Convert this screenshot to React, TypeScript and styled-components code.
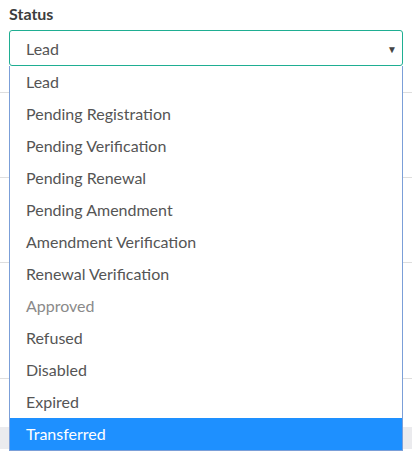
import React from "react";
import styled, { createGlobalStyle } from "styled-components";

const GlobalStyle = createGlobalStyle`
  html, body {
    margin: 0;
    padding: 0;
    background: #fff;
    font-family: Lato, "Open Sans", sans-serif;
  }
`;

const Page = styled.div`
  position: relative;
  width: 412px;
  height: 457px;
  overflow: hidden;
`;

const Field = styled.div`
  padding: 4px 9px 0;
`;

const Label = styled.div`
  font-size: 16px;
  font-weight: 700;
  color: #3d3d3d;
  line-height: 20px;
  margin-bottom: 6px;
`;

const SelectBox = styled.div`
  box-sizing: border-box;
  height: 36px;
  border: 1px solid #1fae92;
  border-radius: 3px;
  display: flex;
  align-items: center;
  justify-content: space-between;
  padding: 0 5px 0 16px;
  font-size: 16px;
  color: #555;
`;

const Caret = styled.span`
  font-size: 10px;
  color: #444;
  margin-top: 2px;
`;

const Backdrop = styled.div`
  display: flex;
  flex-direction: column;
`;

const Row = styled.div<{ $h: number }>`
  height: ${(p) => p.$h}px;
  border-bottom: 1px solid #dedede;
  box-sizing: border-box;
`;

const Band = styled.div`
  height: 22px;
  margin-top: 48px;
  background: #ebebee;
`;

const Menu = styled.ul`
  position: absolute;
  top: 66px;
  left: 9px;
  width: 394px;
  box-sizing: border-box;
  margin: 0;
  padding: 0;
  list-style: none;
  background: #fff;
  border: 1px solid #7b9fd8;
  border-top: none;
`;

const Option = styled.li<{ $active?: boolean; $disabled?: boolean }>`
  height: 32px;
  line-height: 32px;
  padding-left: 16px;
  font-size: 16px;
  color: ${(p) => (p.$active ? "#fff" : p.$disabled ? "#8a8a8a" : "#555")};
  background: ${(p) => (p.$active ? "#1e90ff" : "transparent")};
`;

const options = [
  "Lead",
  "Pending Registration",
  "Pending Verification",
  "Pending Renewal",
  "Pending Amendment",
  "Amendment Verification",
  "Renewal Verification",
  "Approved",
  "Refused",
  "Disabled",
  "Expired",
  "Transferred",
];

const App: React.FC = () => {
  return (
    <Page>
      <GlobalStyle />
      <Field>
        <Label>Status</Label>
        <SelectBox>
          <span>Lead</span>
          <Caret>▼</Caret>
        </SelectBox>
      </Field>
      <Backdrop>
        <Row $h={27} />
        <Row $h={85} />
        <Row $h={85} />
        <Row $h={116} />
        <Band />
      </Backdrop>
      <Menu>
        {options.map((o) => (
          <Option
            key={o}
            $disabled={o === "Approved"}
            $active={o === "Transferred"}
          >
            {o}
          </Option>
        ))}
      </Menu>
    </Page>
  );
};

export default App;
